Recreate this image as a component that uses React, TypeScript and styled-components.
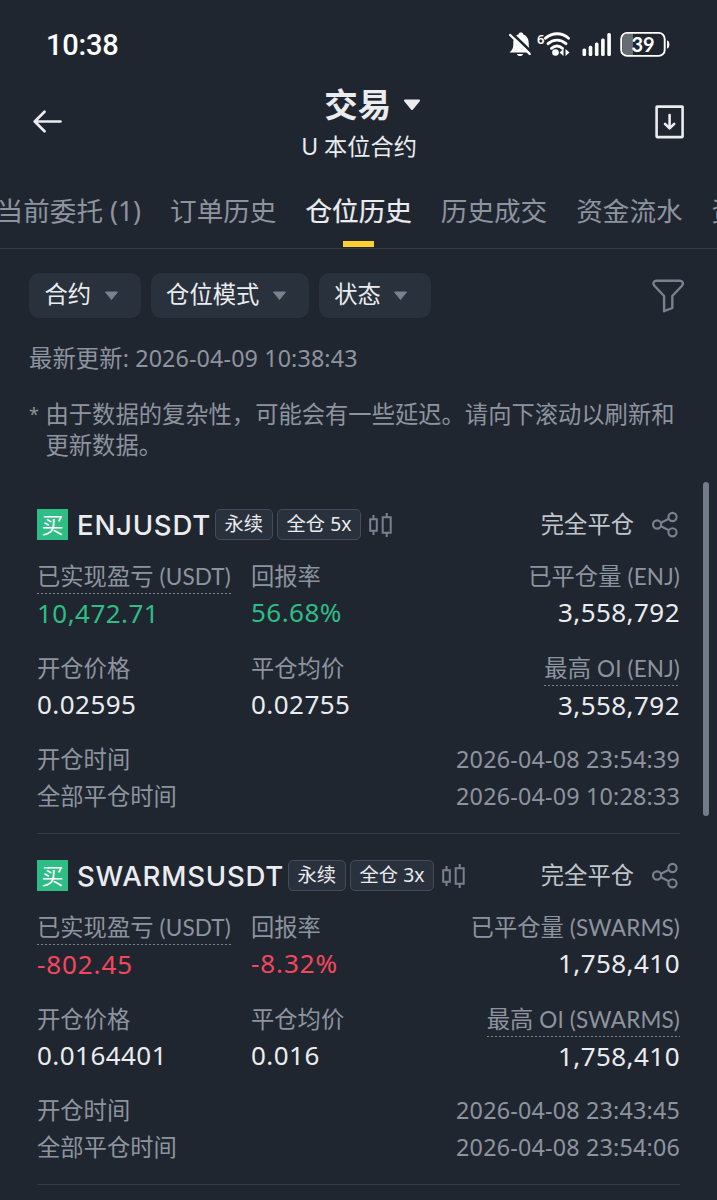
import React from 'react';
import styled, { createGlobalStyle, css } from 'styled-components';

const color = {
  bg: '#202630',
  raised: '#29313d',
  line: '#333b47',
  text: '#eaecef',
  soft: '#c1c6cd',
  muted: '#8d949f',
  icon: '#79818f',
  green: '#2ebd85',
  red: '#f6465d',
  yellow: '#fcd02e',
};

const Global = createGlobalStyle`
  * { box-sizing: border-box; }
  html, body { margin: 0; background: ${color.bg}; }
  body {
    font-family: 'Noto Sans', 'Noto Sans CJK SC', sans-serif;
    color: ${color.text};
    overflow: hidden;
  }
  svg { display: block; flex: none; }
`;

const Screen = styled.main`
  position: relative;
  width: 717px;
  height: 1200px;
  overflow: hidden;
  background: ${color.bg};
  white-space: nowrap;
`;

const StatusBar = styled.div`
  height: 88px;
  padding: 1px 46px 0 46px;
  display: flex;
  align-items: center;
  justify-content: space-between;
`;

const Clock = styled.span`
  margin-top: 1px;
  font-family: Roboto, sans-serif;
  font-size: 29px;
  font-weight: 500;
  line-height: 34px;
  letter-spacing: -0.2px;
  color: #fff;
`;

const StatusIcons = styled.div`
  display: flex;
  align-items: center;
`;

const Header = styled.header`
  height: 92px;
  padding: 0 32px 0 33px;
  display: grid;
  grid-template-columns: 60px 1fr 61px;
`;

const HeaderSide = styled.div<{ $end?: boolean }>`
  display: flex;
  align-items: center;
  padding-bottom: ${(p) => (p.$end ? 25 : 26)}px;
  justify-content: ${(p) => (p.$end ? 'flex-end' : 'flex-start')};
`;

const Titles = styled.div`
  display: flex;
  flex-direction: column;
  align-items: center;
`;

const Title = styled.h1`
  margin: -5px 0 0;
  height: 42px;
  display: flex;
  align-items: center;
  gap: 12px;
  padding-left: 28.5px;
  font-size: 33.5px;
  line-height: 42px;
  font-weight: 700;

  svg {
    margin-top: 2px;
  }
`;

const Subtitle = styled.div`
  height: 30px;
  margin-top: 6px;
  padding-left: 1px;
  font-size: 23.2px;
  line-height: 30px;
`;

const Tabs = styled.nav`
  height: 69px;
  margin-left: -3.4px;
  display: flex;
  gap: 29px;
  border-bottom: 1px solid ${color.line};
`;

const Tab = styled.div<{ $active?: boolean }>`
  flex: none;
  height: 67px;
  display: flex;
  flex-direction: column;
  align-items: center;
  justify-content: space-between;
  padding-top: 14px;
  font-size: 26.6px;
  line-height: 34px;
  color: ${(p) => (p.$active ? color.text : color.muted)};
  ${(p) =>
    p.$active &&
    css`
      -webkit-text-stroke: 0.25px ${color.text};
      &::after {
        content: '';
        width: 31px;
        height: 6px;
        background: ${color.yellow};
      }
    `}
`;

const Filters = styled.div`
  display: flex;
  align-items: center;
  gap: 9.5px;
  padding: 24px 32px 0 29px;
`;

const Chip = styled.button`
  height: 45px;
  padding: 0 22.5px 3px 15.500px;
  display: flex;
  align-items: center;
  gap: 12.500px;
  border: 0;
  border-radius: 10px;
  background: ${color.raised};
  color: ${color.text};
  font: 400 23.3px/30px 'Noto Sans', 'Noto Sans CJK SC', sans-serif;

  svg {
    margin-top: 3px;
  }
`;

const Spacer = styled.div`
  flex: 1;
`;

const Updated = styled.div`
  margin: 24px 0 0 29px;
  font-size: 23.3px;
  line-height: 32px;
  letter-spacing: 0.12px;
  color: ${color.muted};
`;

const Note = styled.div`
  margin: 25px 0 0 29px;
  display: flex;
  gap: 6px;
  font-size: 23.3px;
  line-height: 31px;
  color: ${color.muted};
`;

const Star = styled.span`
  width: 10.500px;
  font-size: 18px;
`;

const NoteText = styled.p`
  margin: 0;
`;

const List = styled.section`
  padding: 22px 37px 0;
`;

const Card = styled.article`
  height: 351px;
  padding-top: 26px;
  border-bottom: 1px solid ${color.line};
`;

const CardHead = styled.div`
  height: 31px;
  display: flex;
  align-items: center;
`;

const Side = styled.span`
  width: 31px;
  height: 31px;
  flex: none;
  display: flex;
  align-items: center;
  justify-content: center;
  padding-bottom: 2px;
  background: ${color.green};
  color: #fff;
  font-size: 22px;
  line-height: 30px;
`;

const Symbol = styled.h2<{ $width: number }>`
  width: ${(p) => p.$width}px;
  margin: 0 6px 0 9px;
  font-family: Inter, sans-serif;
  font-size: 27.6px;
  line-height: 34px;
  font-weight: 500;
  letter-spacing: 0.75px;
`;

const Tag = styled.span`
  height: 31px;
  margin-right: 4px;
  padding: 0 9px 2px 8.500px;
  display: flex;
  align-items: center;
  border: 1px solid #434c5a;
  border-radius: 5px;
  background: ${color.raised};
  font-size: 19.3px;
  line-height: 28px;
`;

const Status = styled.span`
  margin-left: auto;
  margin-right: 18px;
  padding-bottom: 1px;
  font-size: 23.3px;
  line-height: 30px;
  color: ${color.soft};
`;

const Metrics = styled.div<{ $top: number }>`
  margin-top: ${(p) => p.$top}px;
  height: 70px;
  display: grid;
  grid-template-columns: 214px 1fr auto;
`;

const Metric = styled.div<{ $end?: boolean }>`
  display: flex;
  flex-direction: column;
  align-items: ${(p) => (p.$end ? 'flex-end' : 'flex-start')};
`;

const Label = styled.div<{ $dotted?: boolean }>`
  height: 34px;
  font-size: 23.3px;
  line-height: 33px;
  color: ${color.muted};
  border-bottom: 1px dashed transparent;
  ${(p) =>
    p.$dotted &&
    css`
      background: repeating-linear-gradient(90deg, #7d8490 0 2px, transparent 2px 4px) left bottom / 100% 1px no-repeat;
      background-origin: border-box;
      background-clip: border-box;
    `}
`;

const Latin = styled.span`
  font-family: Lato, sans-serif;
  font-size: 22.5px;
  letter-spacing: 0.15px;
`;

const Value = styled.div<{ $tone?: string; $drop?: boolean }>`
  margin-top: ${(p) => (p.$drop ? 1 : 0)}px;
  height: 37px;
  font-size: 26px;
  line-height: 37px;
  letter-spacing: ${(p) => (p.$tone === color.red ? 0.9 : 0.45)}px;
  color: ${(p) => p.$tone || color.text};
`;

const Times = styled.div`
  margin-top: 19px;
`;

const TimeRow = styled.div`
  height: 37px;
  display: flex;
  justify-content: space-between;
  font-size: 23.3px;
  line-height: 37px;
  color: ${color.muted};
`;

const Stamp = styled.span`
  letter-spacing: 0.2px;
`;

const Scrollbar = styled.div`
  position: absolute;
  top: 482px;
  right: 8px;
  width: 6px;
  height: 334px;
  border-radius: 3px;
  background: #747c8b;
`;

const Caret = ({ big }: { big?: boolean }) =>
  big ? (
    <svg width="18" height="12" viewBox="0 0 18 12">
      <path d="M2 1.5h14L9 10z" fill={color.text} stroke={color.text} strokeWidth="2" strokeLinejoin="round" />
    </svg>
  ) : (
    <svg width="15" height="10" viewBox="0 0 15 10">
      <path d="M1.5 1h12L7.500 8.500z" fill={color.icon} stroke={color.icon} strokeWidth="1" strokeLinejoin="round" />
    </svg>
  );

const StatusGlyphs = () => (
  <svg width="162" height="30" viewBox="0 0 162 30" fill="#fff">
    <g transform="translate(-1 0)">
      <path d="M1.500 22.500c3.300-2.500 3.800-5 3.800-9 0-5.500 2.500-8.500 5.200-9 .3-2.600 4.500-2.600 4.800 0 3.200.9 5.400 4 5.400 8.500 0 4 .6 6.500 2.300 9.500zM9 24h6c-.5 2.700-5.500 2.700-6 0z" />
      <path d="M3 2.500L23.500 22" stroke={color.bg} strokeWidth="2.600" />
      <path d="M2.200 5L21.700 24" stroke="#fff" strokeWidth="2.400" strokeLinecap="round" />
    </g>
    <text x="28" y="14" fontFamily="'Noto Sans', sans-serif" fontSize="13" fontWeight="600">6</text>
    <g fill="none" stroke="#fff" strokeWidth="2.900" strokeLinecap="round">
      <path d="M36.500 8.200c7-6 16.500-6 23 0M39 13.600c5.500-4.600 12.500-4.600 18 0M42.500 18.300c3.400-2.700 7.600-2.700 11 0" />
    </g>
    <circle cx="46.500" cy="22.500" r="3.300" />
    <path d="M54.500 19v7l-4-3.500zM56.500 19v7l4-3.500z" />
    <rect x="73.500" y="18.500" width="3.600" height="7.500" rx="1.500" />
    <rect x="79.700" y="15.800" width="3.600" height="10.200" rx="1.500" />
    <rect x="85.900" y="12.500" width="3.600" height="13.500" rx="1.500" />
    <rect x="92.100" y="8.500" width="3.600" height="17.500" rx="1.500" />
    <rect x="98.300" y="3" width="3.600" height="23" rx="1.500" />
    <path d="M119 3.500h5v22h-5a5.500 5.500 0 0 1-5.500-5.500v-11a5.500 5.500 0 0 1 5.500-5.500z" fill="#676c74" />
    <rect x="112.200" y="2.900" width="43.500" height="23" rx="6" fill="none" stroke="#fff" strokeWidth="1.900" />
    <path d="M158 10.500c3.200 0 3.200 8 0 8z" />
    <text x="134" y="21.500" textAnchor="middle" fontFamily="Lato, sans-serif" fontSize="20" fontWeight="700">39</text>
  </svg>
);

const BackIcon = () => (
  <svg width="30" height="24" viewBox="0 0 30 24" fill="none" stroke={color.text} strokeWidth="2.700" strokeLinecap="round" strokeLinejoin="round">
    <path d="M27.500 12.500H2M11.500 2.800L1.700 12.500l9.800 9.700" />
  </svg>
);

const DownloadIcon = () => (
  <svg width="30" height="34" viewBox="0 0 30 34" fill="none" stroke={color.text} strokeLinecap="round" strokeLinejoin="round">
    <rect x="1.600" y="1.600" width="26" height="30.500" rx=".5" strokeWidth="2.600" />
    <path d="M14.600 10v13M10 18.800l4.600 4.600 4.600-4.600" strokeWidth="2.600" />
  </svg>
);

const FilterIcon = () => (
  <svg width="33" height="34" viewBox="0 0 33 34" fill="none" stroke={color.icon} strokeWidth="2.400" strokeLinejoin="round">
    <path d="M4.300 1.700h23.700c3 0 3.700 3.200 2 5L20.300 17v12l-8.200 3.200V17L2.400 6.700c-1.800-1.800-1-5 1.900-5z" />
  </svg>
);

const CandleIcon = () => (
  <svg width="28" height="26" viewBox="-2 0 28 26" fill="none" stroke={color.icon} strokeWidth="2">
    <path d="M3.200 7.200h6.600v11.500H3.200zM6.500 3v4.200M6.500 18.700V23M15.700 5.200h8v15.500h-8zM19.700 1v4.200M19.700 20.700V25" />
  </svg>
);

const ShareIcon = () => (
  <svg width="28" height="28" viewBox="0 0 28 28" fill="none" stroke={color.icon} strokeWidth="2.100">
    <circle cx="5.100" cy="13.500" r="4.100" />
    <circle cx="20.500" cy="6" r="4.100" />
    <circle cx="20.500" cy="21.300" r="4.100" />
    <path d="M8.900 11.700l8-3.900M8.900 15.300l8 4" />
  </svg>
);

interface Position {
  symbol: string;
  asset: string;
  width: number;
  leverage: string;
  tone: string;
  pnl: string;
  roi: string;
  size: string;
  entry: string;
  exit: string;
  opened: string;
  closed: string;
}

const positions: Position[] = [
  {
    symbol: 'ENJUSDT', asset: 'ENJ', width: 132, leverage: '5x', tone: color.green,
    pnl: '10,472.71', roi: '56.68%', size: '3,558,792', entry: '0.02595', exit: '0.02755',
    opened: '2026-04-08 23:54:39', closed: '2026-04-09 10:28:33',
  },
  {
    symbol: 'SWARMSUSDT', asset: 'SWARMS', width: 205, leverage: '3x', tone: color.red,
    pnl: '-802.45', roi: '-8.32%', size: '1,758,410', entry: '0.0164401', exit: '0.016',
    opened: '2026-04-08 23:43:45', closed: '2026-04-08 23:54:06',
  },
];

const PositionCard = ({ p }: { p: Position }) => (
  <Card>
    <CardHead>
      <Side>买</Side>
      <Symbol $width={p.width}>{p.symbol}</Symbol>
      <Tag>永续</Tag>
      <Tag>全仓 {p.leverage}</Tag>
      <CandleIcon />
      <Status>完全平仓</Status>
      <ShareIcon />
    </CardHead>
    <Metrics $top={20}>
      <Metric>
        <Label $dotted>已实现盈亏 <Latin>(USDT)</Latin></Label>
        <Value $tone={p.tone} $drop>{p.pnl}</Value>
      </Metric>
      <Metric>
        <Label>回报率</Label>
        <Value $tone={p.tone}>{p.roi}</Value>
      </Metric>
      <Metric $end>
        <Label>已平仓量 <Latin>({p.asset})</Latin></Label>
        <Value>{p.size}</Value>
      </Metric>
    </Metrics>
    <Metrics $top={22}>
      <Metric>
        <Label>开仓价格</Label>
        <Value>{p.entry}</Value>
      </Metric>
      <Metric>
        <Label>平仓均价</Label>
        <Value>{p.exit}</Value>
      </Metric>
      <Metric $end>
        <Label $dotted>最高 <Latin>OI ({p.asset})</Latin></Label>
        <Value $drop>{p.size}</Value>
      </Metric>
    </Metrics>
    <Times>
      <TimeRow><span>开仓时间</span><Stamp>{p.opened}</Stamp></TimeRow>
      <TimeRow><span>全部平仓时间</span><Stamp>{p.closed}</Stamp></TimeRow>
    </Times>
  </Card>
);

export default function App() {
  return (
    <Screen lang="zh-CN">
      <Global />
      <StatusBar>
        <Clock>10:38</Clock>
        <StatusIcons><StatusGlyphs /></StatusIcons>
      </StatusBar>
      <Header>
        <HeaderSide><BackIcon /></HeaderSide>
        <Titles>
          <Title>交易<Caret big /></Title>
          <Subtitle>U 本位合约</Subtitle>
        </Titles>
        <HeaderSide $end><DownloadIcon /></HeaderSide>
      </Header>
      <Tabs>
        <Tab>当前委托 (1)</Tab>
        <Tab>订单历史</Tab>
        <Tab $active>仓位历史</Tab>
        <Tab>历史成交</Tab>
        <Tab>资金流水</Tab>
        <Tab>资金费用</Tab>
      </Tabs>
      <Filters>
        <Chip>合约<Caret /></Chip>
        <Chip>仓位模式<Caret /></Chip>
        <Chip>状态<Caret /></Chip>
        <Spacer />
        <FilterIcon />
      </Filters>
      <Updated>最新更新: 2026-04-09 10:38:43</Updated>
      <Note>
        <Star>*</Star>
        <NoteText>由于数据的复杂性，可能会有一些延迟。请向下滚动以刷新和<br />更新数据。</NoteText>
      </Note>
      <List>
        {positions.map((p) => <PositionCard key={p.symbol} p={p} />)}
      </List>
      <Scrollbar />
    </Screen>
  );
}
